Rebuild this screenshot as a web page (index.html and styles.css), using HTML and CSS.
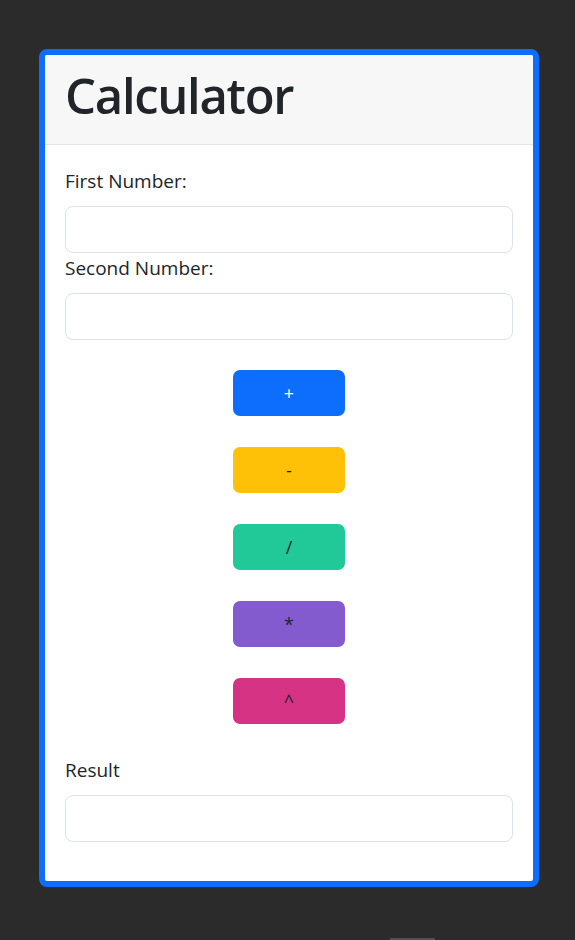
FILE: index.html
```html
<!DOCTYPE html>
<html lang="en">
<head>
<meta charset="utf-8">
<title>Calculator</title>
<link rel="stylesheet" href="styles.css">
</head>
<body>
<div class="card">
  <div class="card-header">
    <h1 class="title">Calculator</h1>
  </div>
  <div class="card-body">
    <label class="label" for="a">First Number:</label>
    <input class="field" id="a" type="text">
    <label class="label" for="b">Second Number:</label>
    <input class="field" id="b" type="text">
    <div class="ops">
      <button class="btn btn-blue">+</button>
      <button class="btn btn-yellow">-</button>
      <button class="btn btn-teal">/</button>
      <button class="btn btn-purple">*</button>
      <button class="btn btn-pink">^</button>
    </div>
    <label class="label" for="r">Result</label>
    <input class="field field-last" id="r" type="text">
  </div>
</div>
<div class="thumb"></div>
</body>
</html>
```

FILE: styles.css
```css
html, body {
  margin: 0;
  padding: 0;
  background: #2b2b2b;
  height: 100%;
}
body {
  font-family: "Open Sans", "Noto Sans", sans-serif;
  color: #212529;
  padding: 49px 0 0 39px;
  box-sizing: border-box;
  position: relative;
}
.card {
  width: 500px;
  box-sizing: border-box;
  border: 6px solid #0d6efd;
  border-radius: 8px;
  background: #fff;
  overflow: hidden;
}
.card-header {
  background: #f7f7f7;
  border-bottom: 1px solid #e4e4e4;
  padding: 10px 20px 9px;
}
.title {
  margin: 0 0 10px 0;
  font-size: 49px;
  line-height: 60px;
  font-weight: 600;
  letter-spacing: -1.3px;
}
.card-body {
  padding: 21px 20px 39px;
  display: flex;
  flex-direction: column;
}
.label {
  font-size: 19px;
  line-height: 30px;
  margin-bottom: 10px;
}
.field {
  height: 47px;
  box-sizing: border-box;
  border: 1px solid #dee2e6;
  border-radius: 8px;
  background: #fff;
  margin: 0;
  font-size: 20px;
  padding: 7px 15px;
}
.ops {
  display: flex;
  flex-direction: column;
  align-items: center;
  gap: 31px;
  padding: 30px 0 31px;
}
.btn {
  width: 112px;
  height: 46px;
  border: none;
  border-radius: 7px;
  font-family: "Open Sans", "Noto Sans", sans-serif;
  font-size: 18px;
  color: #212529;
  padding: 0;
}
.btn-blue { background: #0d6efd; color: #fff; }
.btn-yellow { background: #ffc107; }
.btn-teal { background: #20c997; }
.btn-purple { background: #845bce; }
.btn-pink { background: #d63384; }
.thumb {
  position: absolute;
  left: 390px;
  bottom: 0;
  width: 45px;
  height: 2px;
  background: #505050;
}
```
